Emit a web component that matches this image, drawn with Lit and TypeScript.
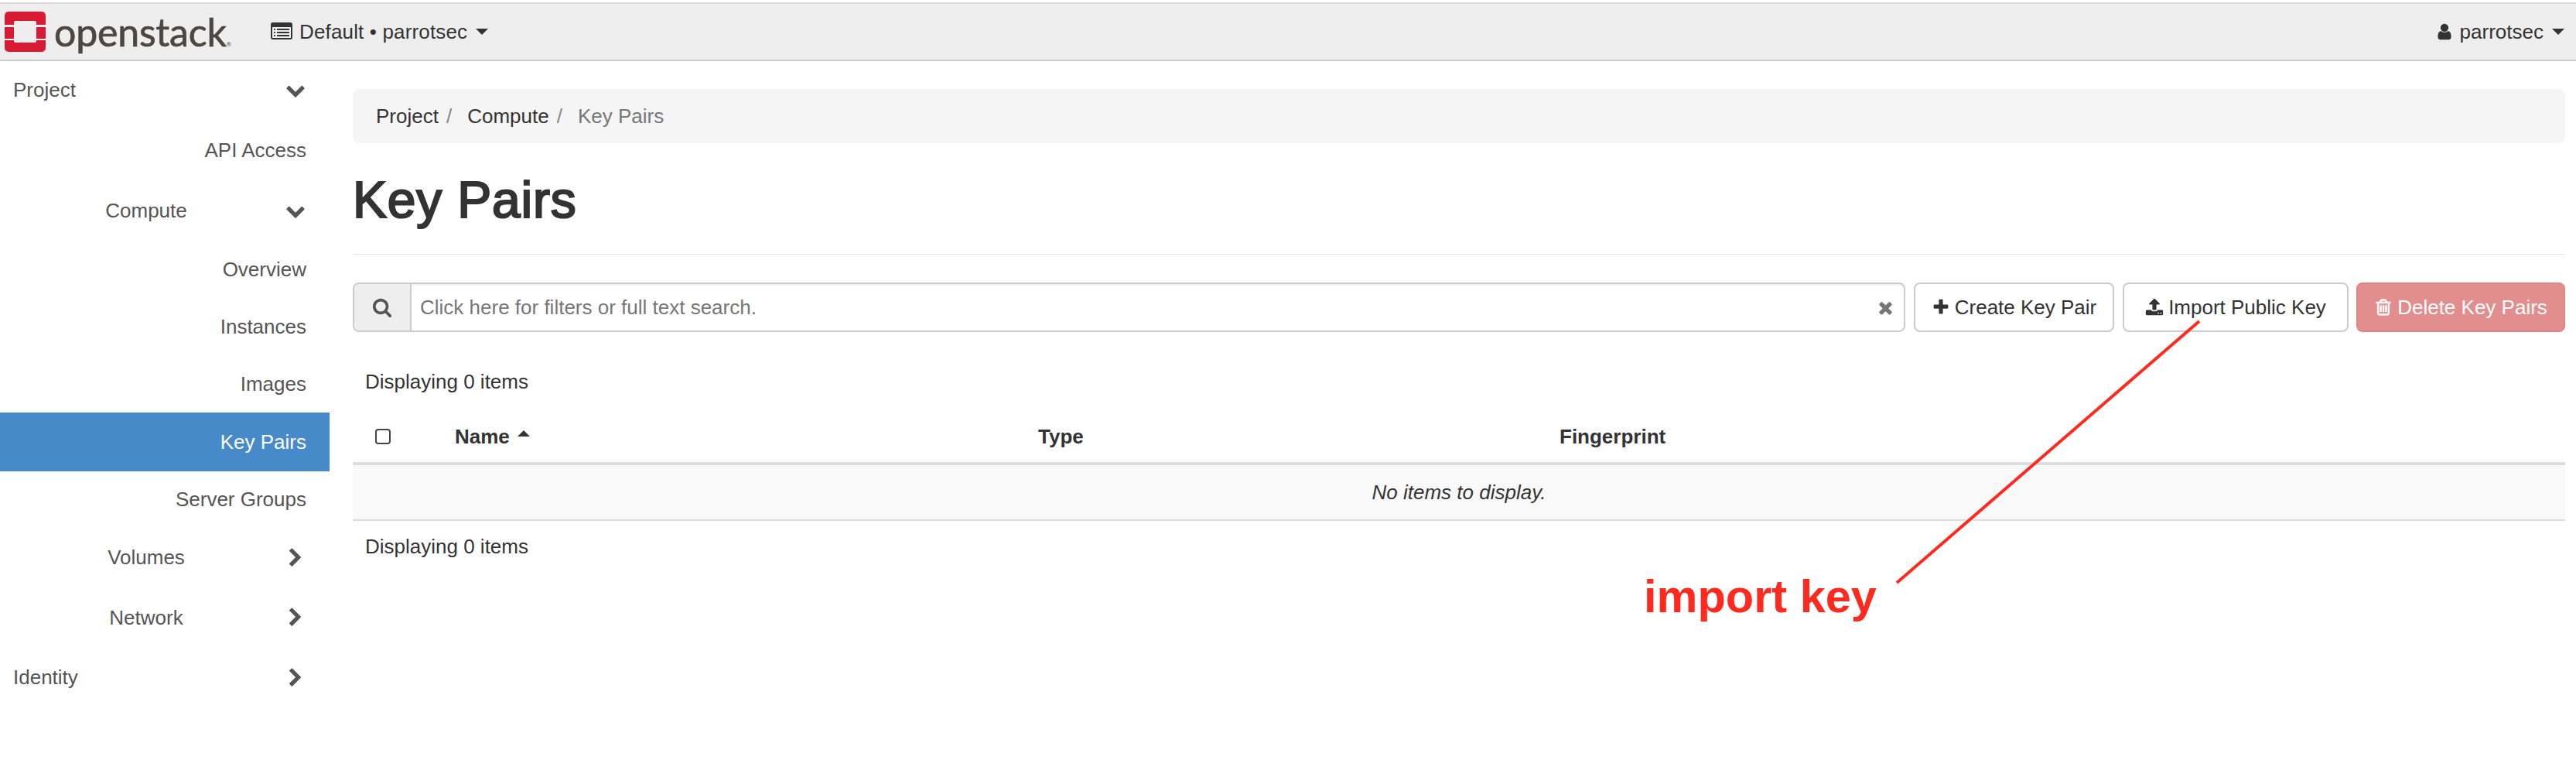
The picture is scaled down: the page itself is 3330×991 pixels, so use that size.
import { LitElement, html, css, svg } from 'lit';
import { customElement } from 'lit/decorators.js';

// font-awesome 4 glyphs, all on a 1792 box
const ICONS: Record<string, string> = {
  down: 'M1683 808l-742 741q-19 19-45 19t-45-19l-742-741q-19-19-19-45.5t19-45.5l166-165q19-19 45-19t45 19l531 531 531-531q19-19 45-19t45 19l166 165q19 19 19 45.5t-19 45.5z',
  right: 'M1363 877l-742 742q-19 19-45 19t-45-19l-166-166q-19-19-19-45t19-45l531-531-531-531q-19-19-19-45t19-45l166-166q19-19 45-19t45 19l742 742q19 19 19 45t-19 45z',
  search: 'M1216 832q0-185-131.5-316.5t-316.5-131.5-316.5 131.5-131.5 316.5 131.5 316.5 316.5 131.5 316.5-131.5 131.5-316.5zm512 832q0 52-38 90t-90 38q-54 0-90-38l-343-342q-179 124-399 124-143 0-273.5-55.5t-225-150-150-225-55.5-273.5 55.5-273.5 150-225 225-150 273.5-55.5 273.5 55.5 225 150 150 225 55.5 273.5q0 220-124 399l343 343q37 37 37 90z',
  plus: 'M1600 736v192q0 40-28 68t-68 28h-416v416q0 40-28 68t-68 28h-192q-40 0-68-28t-28-68v-416h-416q-40 0-68-28t-28-68v-192q0-40 28-68t68-28h416v-416q0-40 28-68t68-28h192q40 0 68 28t28 68v416h416q40 0 68 28t28 68z',
  times: 'M1490 1322q0 40-28 68l-136 136q-28 28-68 28t-68-28l-294-294-294 294q-28 28-68 28t-68-28l-136-136q-28-28-28-68t28-68l294-294-294-294q-28-28-28-68t28-68l136-136q28-28 68-28t68 28l294 294 294-294q28-28 68-28t68 28l136 136q28 28 28 68t-28 68l-294 294 294 294q28 28 28 68z',
  user: 'M1536 1399q0 109-62.5 187t-150.5 78h-854q-88 0-150.5-78t-62.5-187q0-85 8.5-160.5t31.5-152 58.5-131 94-89 134.5-34.5q131 128 313 128t313-128q76 0 134.5 34.5t94 89 58.5 131 31.5 152 8.5 160.5zm-256-887q0 159-112.5 271.5t-271.5 112.5-271.5-112.5-112.5-271.5 112.5-271.5 271.5-112.5 271.5 112.5 112.5 271.5z',
  trash: 'M704 736v576q0 14-9 23t-23 9h-64q-14 0-23-9t-9-23v-576q0-14 9-23t23-9h64q14 0 23 9t9 23zm256 0v576q0 14-9 23t-23 9h-64q-14 0-23-9t-9-23v-576q0-14 9-23t23-9h64q14 0 23 9t9 23zm256 0v576q0 14-9 23t-23 9h-64q-14 0-23-9t-9-23v-576q0-14 9-23t23-9h64q14 0 23 9t9 23zm128 724v-948h-896v948q0 22 7 40.5t14.5 27 10.5 8.5h832q3 0 10.5-8.5t14.5-27 7-40.5zm-672-1076h448l-48-117q-7-9-17-11h-317q-10 2-17 11zm928 32v64q0 14-9 23t-23 9h-96v948q0 83-47 143.5t-113 60.5h-832q-66 0-113-58.5t-47-141.5v-952h-96q-14 0-23-9t-9-23v-64q0-14 9-23t23-9h309l70-167q15-37 54-63t79-26h320q40 0 79 26t54 63l70 167h309q14 0 23 9t9 23z',
  upload: 'M1344 1472q0-26-19-45t-45-19-45 19-19 45 19 45 45 19 45-19 19-45zm256 0q0-26-19-45t-45-19-45 19-19 45 19 45 45 19 45-19 19-45zm128-224v320q0 40-28 68t-68 28h-1472q-40 0-68-28t-28-68v-320q0-40 28-68t68-28h427q21 56 70.5 92t110.5 36h256q61 0 110.5-36t70.5-92h427q40 0 68 28t28 68zm-325-648q-17 40-59 40h-256v448q0 26-19 45t-45 19h-256q-26 0-45-19t-19-45v-448h-256q-42 0-59-40-17-39 14-69l448-448q18-19 45-19t45 19l448 448q31 30 14 69z',
  list: 'M384 1184v64q0 13-9.5 22.5t-22.5 9.5h-64q-13 0-22.5-9.5t-9.5-22.5v-64q0-13 9.5-22.5t22.5-9.5h64q13 0 22.5 9.5t9.5 22.5zm0-256v64q0 13-9.5 22.5t-22.5 9.5h-64q-13 0-22.5-9.5t-9.5-22.5v-64q0-13 9.5-22.5t22.5-9.5h64q13 0 22.5 9.5t9.5 22.5zm0-256v64q0 13-9.5 22.5t-22.5 9.5h-64q-13 0-22.5-9.5t-9.5-22.5v-64q0-13 9.5-22.5t22.5-9.5h64q13 0 22.5 9.5t9.5 22.5zm1152 512v64q0 13-9.5 22.5t-22.5 9.5h-960q-13 0-22.5-9.5t-9.5-22.5v-64q0-13 9.5-22.5t22.5-9.5h960q13 0 22.5 9.5t9.5 22.5zm0-256v64q0 13-9.5 22.5t-22.5 9.5h-960q-13 0-22.5-9.5t-9.5-22.5v-64q0-13 9.5-22.5t22.5-9.5h960q13 0 22.5 9.5t9.5 22.5zm0-256v64q0 13-9.5 22.5t-22.5 9.5h-960q-13 0-22.5-9.5t-9.5-22.5v-64q0-13 9.5-22.5t22.5-9.5h960q13 0 22.5 9.5t9.5 22.5zm128 704v-832q0-13-9.5-22.5t-22.5-9.5h-1472q-13 0-22.5 9.5t-9.5 22.5v832q0 13 9.5 22.5t22.5 9.5h1472q13 0 22.5-9.5t9.5-22.5zm128-1088v1088q0 66-47 113t-113 47h-1472q-66 0-113-47t-47-113v-1088q0-66 47-113t113-47h1472q66 0 113 47t47 113z',
};

const icon = (name: string, cls = '') =>
  html`<svg class="fa ${cls}" viewBox="0 0 1792 1792" aria-hidden="true">${svg`<path d=${ICONS[name]} fill="currentColor"></path>`}</svg>`;

type NavItem = {
  label: string;
  kind: 'top' | 'sub' | 'leaf';
  open?: boolean;
  active?: boolean;
  size?: 'tall' | 'tight';
};

const NAV: NavItem[] = [
  { label: 'Project', kind: 'top', open: true },
  { label: 'API Access', kind: 'leaf', size: 'tall' },
  { label: 'Compute', kind: 'sub', open: true },
  { label: 'Overview', kind: 'leaf' },
  { label: 'Instances', kind: 'leaf' },
  { label: 'Images', kind: 'leaf', size: 'tight' },
  { label: 'Key Pairs', kind: 'leaf', active: true },
  { label: 'Server Groups', kind: 'leaf', size: 'tight' },
  { label: 'Volumes', kind: 'sub' },
  { label: 'Network', kind: 'sub' },
  { label: 'Identity', kind: 'top' },
];

@customElement('app-root')
export class AppRoot extends LitElement {
  static styles = css`
    :host {
      display: block;
      position: relative;
      height: 991px;
      overflow: hidden;
      background: #fff;
      color: #333;
      font-family: 'Liberation Sans', Arial, sans-serif;
      font-size: 26px;
    }

    .fa {
      display: block;
      flex: none;
    }

    /* top bar */
    .topbar {
      margin-top: 3px;
      height: 72px;
      display: flex;
      align-items: center;
      background: #eee;
      border-top: 2px solid #d9d9e0;
      border-bottom: 2px solid #ccc;
      padding: 0 15px 0 6px;
    }
    .logo {
      display: block;
      width: 53px;
      height: 52px;
      flex: none;
    }
    .brand {
      margin-left: 11px;
      font-family: Lato, sans-serif;
      font-size: 50px;
      line-height: 60px;
      letter-spacing: -0.2px;
      -webkit-text-stroke: 0.7px #4e4640;
      color: #4e4640;
      width: 280px;
    }
    .brand sup {
      font-size: 8px;
      line-height: 0;
      vertical-align: baseline;
      -webkit-text-stroke: 0;
    }
    .project {
      display: flex;
      align-items: center;
      letter-spacing: 0.15px;
    }
    .project .fa {
      width: 28px;
      height: 28px;
      margin-right: 9px;
    }
    .caret {
      width: 0;
      height: 0;
      border-left: 8px solid transparent;
      border-right: 8px solid transparent;
      border-top: 8px solid #333;
      margin-left: 11px;
    }
    .spacer {
      flex: 1;
    }
    .project.user {
      letter-spacing: 0;
    }
    .user .fa {
      width: 24px;
      height: 24px;
      margin-right: 8px;
    }

    .body {
      display: flex;
    }

    /* side nav */
    .sidenav {
      width: 426px;
      flex: none;
      color: #555;
    }
    .row {
      height: 74.5px;
      display: flex;
      align-items: center;
    }
    .row.first {
      height: 74px;
      margin-bottom: 2px;
    }
    .row.tall {
      height: 78.5px;
    }
    .row.tight {
      height: 73px;
    }
    .row.sub,
    .row.top {
      height: 77.5px;
    }
    .row.first.top {
      height: 74px;
    }
    .row .label {
      width: 378px;
      flex: none;
    }
    .row.top .label {
      padding-left: 17px;
      box-sizing: border-box;
    }
    .row.sub .label {
      text-align: center;
    }
    .row.leaf {
      justify-content: flex-end;
      padding-right: 30px;
    }
    .row.leaf .label {
      width: auto;
    }
    .row.active {
      height: 76px;
      background: #478ac9;
      color: #fff;
    }
    .row .fa {
      width: 26px;
      height: 26px;
      margin-left: -9px;
    }

    /* content */
    .main {
      flex: 1;
      min-width: 0;
      padding: 36px 14px 0 30px;
    }
    .crumbs {
      height: 70px;
      display: flex;
      align-items: center;
      padding: 0 30px;
      background: #f5f5f5;
      border-radius: 8px;
    }
    .crumbs .sep {
      color: #888;
      margin: 0 20px 0 10px;
    }
    .crumbs .current {
      color: #777;
    }
    h1 {
      margin: 34px 0 0;
      font-size: 66px;
      line-height: 78px;
      font-weight: 400;
      letter-spacing: 0.8px;
      -webkit-text-stroke: 2.2px #333;
      color: #333;
    }
    .rule {
      margin-top: 31px;
      border-top: 1px solid #e5e5e5;
    }

    .toolbar {
      margin-top: 36px;
      display: flex;
      gap: 11px;
    }
    .search {
      flex: 1;
      display: flex;
      height: 64px;
      box-sizing: border-box;
      border: 2px solid #ccc;
      border-radius: 8px;
      overflow: hidden;
      box-shadow: inset 0 2px 2px rgba(0, 0, 0, 0.06);
    }
    .addon {
      width: 72px;
      flex: none;
      display: flex;
      align-items: center;
      justify-content: center;
      background: #eee;
      border-right: 2px solid #ccc;
      color: #555;
    }
    .addon .fa {
      width: 26px;
      height: 26px;
    }
    .input {
      flex: 1;
      display: flex;
      align-items: center;
      justify-content: space-between;
      padding: 0 11px 0 11px;
      color: #777;
    }
    .input .fa {
      width: 25px;
      height: 25px;
    }
    .btn {
      height: 64px;
      box-sizing: border-box;
      display: flex;
      align-items: center;
      justify-content: center;
      gap: 6px;
      border: 2px solid #ccc;
      border-radius: 8px;
      background: #fff;
      color: #333;
    }
    .btn .fa {
      width: 24px;
      height: 24px;
    }
    .btn.create {
      width: 259px;
    }
    .btn.import {
      width: 292px;
    }
    .btn.delete {
      width: 270px;
      margin-left: -1px;
      background: #e38e8e;
      border-color: #de8585;
      color: #fff;
    }
    .btn.delete .fa {
      stroke: #fff;
      stroke-width: 50;
    }

    .count {
      padding: 0 16px;
      height: 30px;
      line-height: 30px;
    }
    .count.above {
      margin-top: 49px;
    }
    .table {
      margin-top: 19px;
    }
    .thead {
      height: 74px;
      box-sizing: border-box;
      display: grid;
      grid-template-columns: 132px 754px 674px 1fr;
      align-items: center;
      border-bottom: 4px solid #ddd;
      font-weight: 700;
      padding-top: 4px;
    }
    .check {
      margin-left: 29px;
      width: 20px;
      height: 20px;
      box-sizing: border-box;
      border: 2px solid #444;
      border-radius: 4px;
    }
    .name {
      display: flex;
      align-items: center;
    }
    .sort {
      width: 0;
      height: 0;
      margin: 0 0 9px 10px;
      border-left: 8px solid transparent;
      border-right: 8px solid transparent;
      border-bottom: 8px solid #333;
    }
    .empty {
      height: 72px;
      box-sizing: border-box;
      display: flex;
      align-items: center;
      justify-content: center;
      background: #f9f9f9;
      border-bottom: 2px solid #ddd;
      font-style: italic;
    }
    .count.below {
      margin-top: 18px;
    }

    /* red note someone drew on top of the screenshot */
    .note {
      position: absolute;
      left: 0;
      top: 0;
      pointer-events: none;
    }
    .note-text {
      position: absolute;
      left: 2125px;
      top: 737px;
      font-size: 59.5px;
      line-height: 68px;
      font-weight: 700;
      color: #ff2a1f;
      white-space: nowrap;
    }
  `;

  private renderRow(item: NavItem, index: number) {
    const classes = ['row', item.kind];
    if (index === 0) classes.push('first');
    if (item.size) classes.push(item.size);
    if (item.active) classes.push('active');
    return html`<div class=${classes.join(' ')}>
      <span class="label">${item.label}</span>
      ${item.kind === 'leaf' ? null : icon(item.open ? 'down' : 'right')}
    </div>`;
  }

  render() {
    return html`
      <header class="topbar">
        <svg class="logo" viewBox="0 0 53 52" aria-hidden="true">
          <path
            fill="#da1a32"
            d="M5 0h43a5 5 0 0 1 5 5v12H41v-3a2 2 0 0 0-2-2H14a2 2 0 0 0-2 2v3H0V5a5 5 0 0 1 5-5z"
          ></path>
          <rect x="0" y="20" width="12" height="15" fill="#da1a32"></rect>
          <rect x="41" y="20" width="12" height="15" fill="#da1a32"></rect>
          <path
            fill="#da1a32"
            d="M0 37h12v1a2 2 0 0 0 2 2h25a2 2 0 0 0 2-2v-1h12v10a5 5 0 0 1-5 5H5a5 5 0 0 1-5-5z"
          ></path>
        </svg>
        <div class="brand">openstack<sup>®</sup></div>
        <div class="project">${icon('list')}<span>Default • parrotsec</span><i class="caret"></i></div>
        <div class="spacer"></div>
        <div class="project user">${icon('user')}<span>parrotsec</span><i class="caret"></i></div>
      </header>
      <div class="body">
        <nav class="sidenav">${NAV.map((item, i) => this.renderRow(item, i))}</nav>
        <main class="main">
          <div class="crumbs">
            <span>Project</span><span class="sep">/</span> <span>Compute</span><span class="sep">/</span>
            <span class="current">Key Pairs</span>
          </div>
          <h1>Key Pairs</h1>
          <div class="rule"></div>
          <div class="toolbar">
            <div class="search">
              <div class="addon">${icon('search')}</div>
              <div class="input"><span>Click here for filters or full text search.</span>${icon('times')}</div>
            </div>
            <div class="btn create">${icon('plus')}<span>Create Key Pair</span></div>
            <div class="btn import">${icon('upload')}<span>Import Public Key</span></div>
            <div class="btn delete">${icon('trash')}<span>Delete Key Pairs</span></div>
          </div>
          <div class="count above">Displaying 0 items</div>
          <div class="table">
            <div class="thead">
              <div><div class="check"></div></div>
              <div class="name"><span>Name</span><i class="sort"></i></div>
              <div>Type</div>
              <div>Fingerprint</div>
            </div>
            <div class="empty">No items to display.</div>
          </div>
          <div class="count below">Displaying 0 items</div>
        </main>
      </div>
      <svg class="note" width="3330" height="991" aria-hidden="true">
        <line x1="2843" y1="415" x2="2452" y2="753" stroke="#ff2a1f" stroke-width="4"></line>
      </svg>
      <div class="note-text">import key</div>
    `;
  }
}
